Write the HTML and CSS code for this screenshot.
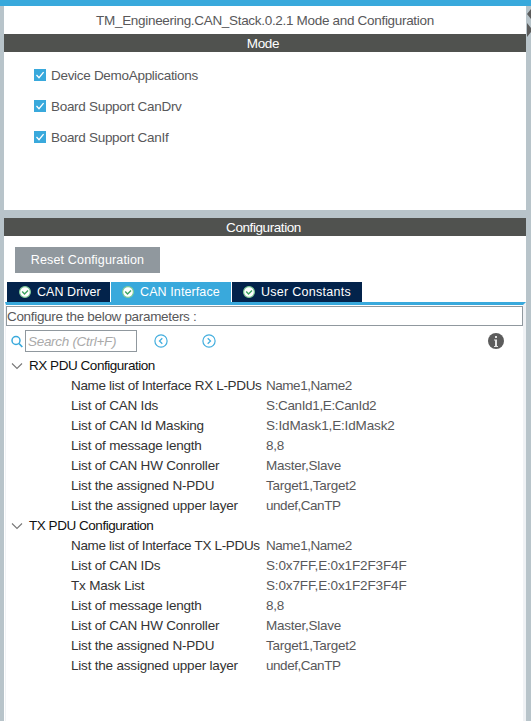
FILE: index.html
```html
<!DOCTYPE html>
<html lang="en">
<head>
<meta charset="utf-8">
<title>TM_Engineering.CAN_Stack.0.2.1 Mode and Configuration</title>
<link rel="stylesheet" href="styles.css">
</head>
<body>
<svg width="0" height="0" class="defs">
  <symbol id="tick" viewBox="0 0 12 12"><rect width="12" height="12" fill="#39a9dc"/><path d="M2.5 6 5 8.7 9.6 3.2" fill="none" stroke="#fff" stroke-width="1.3"/></symbol>
  <symbol id="ok" viewBox="0 0 12 12"><circle cx="6" cy="6" r="5.4" fill="#fff" stroke="#7fcb98" stroke-width="1.2"/><path d="M3.2 5.6 5.5 8 9 4.5" fill="none" stroke="#3ba45f" stroke-width="1.4"/></symbol>
  <symbol id="down" viewBox="0 0 12 8"><path d="M1 1.500 6 6.500 11 1.500" fill="none" stroke="#777" stroke-width="1.1"/></symbol>
</svg>
<div class="topbar"></div>
<main class="frame">
  <section class="mode">
    <h1 class="title">TM_Engineering.CAN_Stack.0.2.1 Mode and Configuration</h1>
    <h2 class="band">Mode</h2>
    <div class="options">
      <div class="option"><svg width="12" height="12"><use href="#tick"/></svg><span>Device DemoApplications</span></div>
      <div class="option"><svg width="12" height="12"><use href="#tick"/></svg><span>Board Support CanDrv</span></div>
      <div class="option"><svg width="12" height="12"><use href="#tick"/></svg><span>Board Support CanIf</span></div>
    </div>
  </section>
  <section class="config">
    <h2 class="band band-config">Configuration</h2>
    <button class="reset">Reset Configuration</button>
    <nav class="tabs">
      <div class="tab driver"><svg width="12" height="12"><use href="#ok"/></svg><span>CAN Driver</span></div>
      <div class="tab active"><svg width="12" height="12"><use href="#ok"/></svg><span>CAN Interface</span></div>
      <div class="tab user"><svg width="12" height="12"><use href="#ok"/></svg><span>User Constants</span></div>
    </nav>
    <div class="panel">
      <div class="hint">Configure the below parameters :</div>
      <div class="tools">
        <svg class="lens" width="12" height="13" viewBox="0 0 12 13"><circle cx="5" cy="5.500" r="4" fill="none" stroke="#39a9dc" stroke-width="1.5"/><path d="M8 8.500 11.300 12" stroke="#39a9dc" stroke-width="1.7"/></svg>
        <div class="search">Search (Ctrl+F)</div>
        <svg class="prev" width="14" height="14" viewBox="0 0 14 14" fill="none" stroke="#43aede"><circle cx="7" cy="7" r="6.1" stroke-width="1.2"/><path d="M8.3 4.2 5.5 7 8.3 9.8" stroke-width="1.3"/></svg>
        <svg class="next" width="14" height="14" viewBox="0 0 14 14" fill="none" stroke="#43aede"><circle cx="7" cy="7" r="6.1" stroke-width="1.2"/><path d="M5.7 4.2 8.5 7 5.7 9.8" stroke-width="1.3"/></svg>
        <svg class="info" width="16" height="16" viewBox="0 0 16 16"><circle cx="8" cy="8" r="8" fill="#5c5c5c"/><path d="M7 3h2v2H7zM6 6.500h3V13h1v1H6v-1h1V7.500H6z" fill="#e4e4e4"/></svg>
      </div>
      <div class="group"><svg width="12" height="8"><use href="#down"/></svg><span>RX PDU Configuration</span></div>
      <dl class="rows">
        <dt class="tight">Name list of Interface RX L-PDUs</dt><dd class="tight">Name1,Name2</dd>
        <dt>List of CAN Ids</dt><dd class="loose">S:CanId1,E:CanId2</dd>
        <dt>List of CAN Id Masking</dt><dd class="hex">S:IdMask1,E:IdMask2</dd>
        <dt>List of message length</dt><dd>8,8</dd>
        <dt>List of CAN HW Conroller</dt><dd>Master,Slave</dd>
        <dt>List the assigned N-PDU</dt><dd>Target1,Target2</dd>
        <dt>List the assigned upper layer</dt><dd class="tight">undef,CanTP</dd>
      </dl>
      <div class="group"><svg width="12" height="8"><use href="#down"/></svg><span>TX PDU Configuration</span></div>
      <dl class="rows">
        <dt class="tight">Name list of Interface TX L-PDUs</dt><dd class="tight">Name1,Name2</dd>
        <dt>List of CAN IDs</dt><dd class="hex">S:0x7FF,E:0x1F2F3F4F</dd>
        <dt>Tx Mask List</dt><dd class="hex">S:0x7FF,E:0x1F2F3F4F</dd>
        <dt>List of message length</dt><dd>8,8</dd>
        <dt>List of CAN HW Conroller</dt><dd>Master,Slave</dd>
        <dt>List the assigned N-PDU</dt><dd>Target1,Target2</dd>
        <dt>List the assigned upper layer</dt><dd class="tight">undef,CanTP</dd>
      </dl>
    </div>
  </section>
  <svg class="arrows" width="5" height="30" viewBox="0 0 5 30"><path d="M5 0v10L1 5zM1 14l4 5v4l-4 5z" fill="#5c5c5c"/></svg>
</main>
</body>
</html>
```
FILE: styles.css
```css
* { box-sizing: border-box; }
html { overflow: hidden; }
body {
  margin: 0;
  height: 721px;
  overflow: hidden;
  display: flex;
  flex-direction: column;
  background: #b8c4ca;
  color: #58585a;
  font: 13.5px/20px "Liberation Sans", Arial, sans-serif;
  letter-spacing: -0.3px;
}
svg { display: block; flex: none; }
.defs { position: absolute; }
.topbar { height: 6px; flex: none; background: #39a9dc; }
.frame {
  position: relative;
  flex: 1;
  display: flex;
  flex-direction: column;
  gap: 8px;
  padding: 0 5px 0 4px;
}
.arrows { position: absolute; right: 0; top: 3px; }
.mode { height: 204px; background: #fff; }
.title {
  margin: 0;
  height: 28px;
  line-height: 29px;
  font-size: 13.5px;
  font-weight: normal;
  letter-spacing: -0.31px;
  text-align: center;
}
.band {
  margin: 0;
  height: 18px;
  line-height: 19px;
  background: #50524f;
  color: #fff;
  font-size: 13.5px;
  font-weight: normal;
  letter-spacing: -0.3px;
  text-align: center;
  padding-right: 4px;
}
.options { padding: 8px 0 0 30px; }
.option { display: flex; align-items: center; gap: 5px; height: 31px; }
.option svg { position: relative; top: -1px; }
.config {
  flex: 1;
  min-height: 0;
  display: flex;
  flex-direction: column;
  background: #fff;
}
.band-config { letter-spacing: -0.42px; padding-right: 3px; }
.reset {
  display: block;
  flex: none;
  margin: 11px 0 9px 11px;
  width: 145px;
  height: 26px;
  padding: 0;
  border: 0;
  background: #90989e;
  color: #fff;
  font: 12.5px "Liberation Sans", Arial, sans-serif;
  letter-spacing: 0.15px;
}
.tabs {
  display: flex;
  gap: 1px;
  height: 20px;
  flex: none;
  padding-left: 3px;
}
.tab {
  display: flex;
  align-items: center;
  gap: 6px;
  padding-left: 12px;
  background: #03234b;
  color: #fff;
  font-size: 12.5px;
  letter-spacing: 0.05px;
}
.driver { width: 103px; }
.active { width: 120px; padding-left: 11px; background: #39a9dc; letter-spacing: 0.1px; }
.user { width: 130px; padding-left: 11px; letter-spacing: 0.28px; }
.panel {
  flex: 1;
  min-height: 0;
  margin: 0 0 0 1px;
  border: solid #f0f2f5;
  border-width: 0 3px 0 1px;
  border-top: 3px solid #39a9dc;
}
.hint {
  height: 20px;
  margin-top: 1px;
  line-height: 19px;
  letter-spacing: -0.32px;
  border: 1px solid #90989e;
  white-space: nowrap;
}
.tools {
  display: flex;
  align-items: center;
  height: 30px;
  padding-left: 5px;
}
.search {
  width: 112px;
  height: 22px;
  margin: 0 17px 0 2px;
  padding-left: 2px;
  line-height: 21px;
  border: 1px solid #90989e;
  color: #aaa;
  font-style: italic;
}
.next { margin-left: 34px; }
.info { margin: 0 19px 0 auto; }
.group {
  display: flex;
  align-items: center;
  gap: 6px;
  height: 20px;
  padding-left: 5px;
  color: #111;
  letter-spacing: -0.46px;
}
.rows {
  display: grid;
  grid-template-columns: 195px 1fr;
  grid-auto-rows: 20px;
  margin: 0;
  padding-left: 65px;
  white-space: nowrap;
}
dt { color: #333; letter-spacing: -0.2px; }
dd { margin: 0; letter-spacing: -0.25px; }
dt.tight { letter-spacing: -0.33px; }
dd.tight { letter-spacing: -0.46px; }
dd.loose { letter-spacing: -0.36px; }
dd.hex { letter-spacing: -0.14px; }
```
